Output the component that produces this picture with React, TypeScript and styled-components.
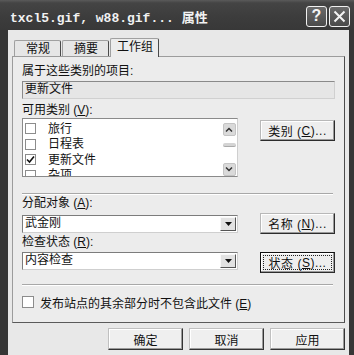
import styled, { createGlobalStyle } from "styled-components"

const GlobalStyle = createGlobalStyle`
  html, body {
    margin: 0;
    padding: 0;
    background: #333;
  }
  * {
    box-sizing: border-box;
  }
`

const UI_FONT = `"Liberation Sans", "Noto Sans CJK SC", sans-serif`

const categories = [
  { name: "旅行", checked: false },
  { name: "日程表", checked: false },
  { name: "更新文件", checked: true },
  { name: "杂项", checked: false },
]

const CheckMark = () => (
  <svg width="9" height="9" viewBox="0 0 9 9">
    <path d="M1 4.5 L3.5 7 L8 1.5" stroke="#111" strokeWidth="1.6" fill="none" />
  </svg>
)

const Chevron = ({ up }: { up?: boolean }) => (
  <svg width="8" height="5" viewBox="0 0 8 5">
    <path
      d={up ? "M1 4.5 L4 1.5 L7 4.5" : "M1 0.5 L4 3.5 L7 0.5"}
      stroke="#333"
      strokeWidth="1.5"
      fill="none"
    />
  </svg>
)

const DownTriangle = () => (
  <svg width="7" height="4" viewBox="0 0 7 4">
    <path d="M0 0 H7 L3.5 4 Z" fill="#111" />
  </svg>
)

const App = () => {
  return (
    <>
      <GlobalStyle />
      <Frame>
        <TitleBar>
          <Title>txcl5.gif, w88.gif... 属性</Title>
          <CaptionButtons>
            <CaptionButton>?</CaptionButton>
            <CaptionButton>
              <svg width="13" height="13" viewBox="0 0 13 13">
                <path d="M1.5 1.5 L11.5 11.5 M11.5 1.5 L1.5 11.5" stroke="#f4f4f4" strokeWidth="2" />
              </svg>
            </CaptionButton>
          </CaptionButtons>
        </TitleBar>

        <Client>
          <TabRow>
            <Tab>常规</Tab>
            <Tab>摘要</Tab>
            <Tab $active>工作组</Tab>
          </TabRow>

          <Panel>
            <Label $top={7}>属于这些类别的项目:</Label>
            <ReadOnlyBox>更新文件</ReadOnlyBox>

            <Label $top={4}>
              可用类别 (<u>V</u>):
            </Label>
            <FieldRow $top={1}>
              <ListBox>
                <ListItems>
                  {categories.map((c) => (
                    <ListItem key={c.name}>
                      <CheckBox>{c.checked && <CheckMark />}</CheckBox>
                      <span>{c.name}</span>
                    </ListItem>
                  ))}
                </ListItems>
                <ScrollBar>
                  <ScrollArrow>
                    <Chevron up />
                  </ScrollArrow>
                  <Thumb />
                  <ScrollArrow>
                    <Chevron />
                  </ScrollArrow>
                </ScrollBar>
              </ListBox>
              <SideButton $top={2}>
                类别 (<u>C</u>)...
              </SideButton>
            </FieldRow>

            <Separator $top={16} />

            <Label $top={1}>
              分配对象 (<u>A</u>):
            </Label>
            <FieldRow $top={3}>
              <Combo $top={2}>
                <ComboText>武金刚</ComboText>
                <DropButton>
                  <DownTriangle />
                </DropButton>
              </Combo>
              <SideButton>
                名称 (<u>N</u>)...
              </SideButton>
            </FieldRow>

            <Label $top={1}>
              检查状态 (<u>R</u>):
            </Label>
            <FieldRow $top={3}>
              <Combo>
                <ComboText>内容检查</ComboText>
                <DropButton>
                  <DownTriangle />
                </DropButton>
              </Combo>
              <SideButton $default>
                <FocusRing>
                  状态 (<u>S</u>)...
                </FocusRing>
              </SideButton>
            </FieldRow>

            <Separator $top={11} />

            <CheckRow>
              <CheckBox $large />
              <span>
                发布站点的其余部分时不包含此文件 (<u>E</u>)
              </span>
            </CheckRow>
          </Panel>

          <Footer>
            <DialogButton>确定</DialogButton>
            <DialogButton>取消</DialogButton>
            <DialogButton>应用</DialogButton>
          </Footer>
        </Client>
      </Frame>
    </>
  )
}

export default App

const Frame = styled.div`
  width: 354px;
  height: 355px;
  display: flex;
  flex-direction: column;
  background: #363636;
  overflow: hidden;
`

const TitleBar = styled.div`
  height: 30px;
  flex-shrink: 0;
  display: flex;
  align-items: center;
  padding: 2px 4px 0 10px;
  background: linear-gradient(#5a5a5a 0, #444 3px, #3c3c3c 60%, #383838 100%);
`

const Title = styled.div`
  flex: 1;
  font-family: "Liberation Mono", "Noto Sans CJK SC", monospace;
  font-weight: 700;
  font-size: 13px;
  color: #f2f2f2;
  white-space: nowrap;
`

const CaptionButtons = styled.div`
  display: flex;
  gap: 2px;
`

const CaptionButton = styled.div`
  width: 21px;
  height: 21px;
  border: 1px solid #f0f0f0;
  border-radius: 3px;
  background: linear-gradient(#6a6a6a, #4a4a4a);
  color: #f4f4f4;
  font-family: "Liberation Sans", sans-serif;
  font-weight: 700;
  font-size: 16px;
  display: flex;
  align-items: center;
  justify-content: center;
`

const Client = styled.div`
  flex: 1;
  margin: 0 5px 0 8px;
  background: #e8e8e8;
  padding: 8px 4px 0 4px;
  font-family: ${UI_FONT};
  font-size: 12px;
  color: #111;

  u {
    text-decoration: underline;
  }
`

const TabRow = styled.div`
  display: flex;
  align-items: flex-end;
  height: 18px;
  padding-left: 2px;
  position: relative;
  z-index: 1;
`

const Tab = styled.div<{ $active?: boolean }>`
  height: ${({ $active }) => ($active ? "19px" : "16px")};
  padding: ${({ $active }) => ($active ? "1px 5px 0 6px" : "1px 10px 0 11px")};
  margin: ${({ $active }) => ($active ? "0 0 -1px 0" : "0 1px 0 0")};
  line-height: 14px;
  border: 1px solid #a0a0a0;
  border-bottom: none;
  border-right-color: #4a4a4a;
  border-radius: 2px 2px 0 0;
  background: ${({ $active }) => ($active ? "#ececec" : "#e6e6e6")};
  white-space: nowrap;
`

const Panel = styled.div`
  height: 267px;
  background: #ececec;
  border: 1px solid #9c9c9c;
  border-right-color: #4c4c4c;
  border-bottom-color: #5a5a5a;
  padding: 0 9px;
`

const Label = styled.div<{ $top?: number }>`
  margin-top: ${({ $top }) => $top ?? 0}px;
  height: 14px;
  line-height: 14px;
  white-space: nowrap;
`

const ReadOnlyBox = styled.div`
  margin-top: 3px;
  height: 18px;
  line-height: 15px;
  padding-left: 2px;
  border: 1px solid #8a8a8a;
  border-right-color: #d0d0d0;
  border-bottom-color: #d0d0d0;
  background: #e6e6e6;
`

const FieldRow = styled.div<{ $top?: number }>`
  margin-top: ${({ $top }) => $top ?? 0}px;
  display: flex;
  justify-content: space-between;
  align-items: flex-start;
`

const ListBox = styled.div`
  width: 216px;
  height: 59px;
  background: #fff;
  border: 1px solid #8a8a8a;
  border-right-color: #cfcfcf;
  display: flex;
  overflow: hidden;
`

const ListItems = styled.div`
  flex: 1;
  padding: 2px 0 0 2px;
`

const ListItem = styled.div`
  height: 15.5px;
  display: flex;
  align-items: center;
  gap: 12px;
  line-height: 14px;
`

const CheckBox = styled.div<{ $large?: boolean }>`
  width: ${({ $large }) => ($large ? 12 : 11)}px;
  height: ${({ $large }) => ($large ? 12 : 11)}px;
  flex-shrink: 0;
  border: 1px solid #8c8c8c;
  background: #fff;
  display: flex;
  align-items: center;
  justify-content: center;
`

const ScrollBar = styled.div`
  width: 14px;
  margin-right: 1px;
  padding: 4px 0 0;
  display: flex;
  flex-direction: column;
  align-items: center;
`

const ScrollArrow = styled.div`
  width: 13px;
  height: 13px;
  border-radius: 2px;
  background: #dadada;
  border: 1px solid #c4c4c4;
  display: flex;
  align-items: center;
  justify-content: center;
`

const Thumb = styled.div`
  width: 13px;
  height: 5px;
  margin: 7px 0 16px;
  border-radius: 2px;
  background: #d4d4d4;
  border-bottom: 1px solid #aaa;
`

const SideButton = styled.div<{ $top?: number; $default?: boolean }>`
  margin-top: ${({ $top }) => $top ?? 0}px;
  width: 75px;
  height: 21px;
  display: flex;
  align-items: center;
  justify-content: center;
  padding: ${({ $default }) => ($default ? "2px" : "0")};
  border: 1px solid ${({ $default }) => ($default ? "#111" : "#b8b8b8")};
  border-right-color: #2c2c2c;
  border-bottom-color: #2c2c2c;
  background: #eeeeee;
  box-shadow: inset -1px -1px 0 #9a9a9a, inset 1px 1px 0 #fff;
  letter-spacing: 0.5px;
  white-space: nowrap;
`

const FocusRing = styled.div`
  width: 100%;
  height: 100%;
  border: 1px dotted #222;
  display: flex;
  align-items: center;
  justify-content: center;
`

const Separator = styled.div<{ $top?: number }>`
  margin: ${({ $top }) => $top ?? 0}px 2px 0 0;
  height: 2px;
  border-top: 1px solid #a8a8a8;
  border-bottom: 1px solid #fff;
`

const Combo = styled.div<{ $top?: number }>`
  margin-top: ${({ $top }) => $top ?? 0}px;
  width: 216px;
  height: 18px;
  background: #fff;
  border: 1px solid #7c7c7c;
  border-right-color: #cfcfcf;
  border-bottom-color: #cfcfcf;
  display: flex;
  align-items: stretch;
`

const ComboText = styled.div`
  flex: 1;
  padding-left: 2px;
  line-height: 15px;
`

const DropButton = styled.div`
  width: 16px;
  margin: 1px 1px 1px 0;
  background: #e2e2e2;
  border: 1px solid #f8f8f8;
  border-right-color: #555;
  border-bottom-color: #555;
  display: flex;
  align-items: center;
  justify-content: center;
`

const CheckRow = styled.div`
  margin-top: 9px;
  height: 14px;
  display: flex;
  align-items: center;
  gap: 6px;
  white-space: nowrap;
`

const Footer = styled.div`
  margin-top: 5px;
  display: flex;
  justify-content: flex-end;
  gap: 6px;
  padding-right: 0;
`

const DialogButton = styled.div`
  width: 75px;
  height: 22px;
  display: flex;
  align-items: center;
  justify-content: center;
  border: 1px solid #c0c0c0;
  border-right-color: #333;
  border-bottom-color: #333;
  background: #efefef;
  box-shadow: inset -1px -1px 0 #9a9a9a, inset 1px 1px 0 #fff;
`
